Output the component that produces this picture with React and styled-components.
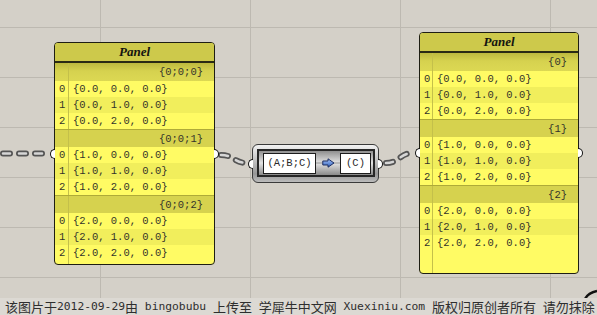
import styled, { createGlobalStyle } from "styled-components";

const GlobalStyle = createGlobalStyle`
  html, body {
    margin: 0;
    padding: 0;
    width: 597px;
    height: 315px;
    overflow: hidden;
    background: #d4d0c8;
  }
`;

const mono = `"Liberation Mono", "DejaVu Sans Mono", monospace`;

const Page = styled.div`
  width: 597px;
  height: 315px;
  display: flex;
  flex-direction: column;
`;

const Canvas = styled.div`
  position: relative;
  height: 298px;
  flex: none;
  background-color: #d4d0c8;
  background-image: linear-gradient(to right, #bdb9b1 1px, transparent 1px),
    linear-gradient(to bottom, #bdb9b1 1px, transparent 1px);
  background-size: 150px 50px;
  background-position: 100px 27px;
  overflow: hidden;
`;

const Wires = styled.svg`
  position: absolute;
  left: 0;
  top: 0;
`;

const PanelBox = styled.div`
  position: absolute;
  left: ${(p) => p.$x}px;
  top: ${(p) => p.$y}px;
  width: ${(p) => p.$w}px;
  height: ${(p) => p.$h}px;
  box-sizing: border-box;
  border: 1px solid #1e1e14;
  border-radius: 4px;
  background: #fffb64;
  display: flex;
  flex-direction: column;
`;

const PanelTitle = styled.div`
  height: 18px;
  border-bottom: 2px solid #2a2a14;
  background: #cdc94b;
  border-radius: 3px 3px 0 0;
  font: italic bold 13px "Liberation Serif", "DejaVu Serif", serif;
  color: #141410;
  text-align: center;
  line-height: 18px;
`;

const PanelBody = styled.div`
  flex: 1;
  display: flex;
  flex-direction: column;
  overflow: hidden;
  border-radius: 0 0 3px 3px;
`;

const Line = styled.div`
  display: flex;
  height: ${(p) => (p.$head ? 18 : 16)}px;
  box-sizing: border-box;
  font: 10.5px ${mono};
  color: #33332a;
  line-height: ${(p) => (p.$head ? 18 : 16)}px;
  background: ${(p) =>
    p.$head
      ? p.$first
        ? "linear-gradient(#bdb93e, #d6d24f 45%, #dcd853)"
        : "#d6d24e"
      : p.$alt
      ? "#f1ee5c"
      : "#fffb64"};
  border-top: ${(p) => (p.$head && !p.$first ? "1px solid #aeaa38" : "none")};
`;

const Index = styled.span`
  width: ${(p) => p.$iw}px;
  flex: none;
  box-sizing: border-box;
  padding-left: 4px;
  border-right: 1px solid #c4c04a;
`;

const Value = styled.span`
  flex: 1;
  padding-left: 4px;
  padding-right: 11px;
  text-align: ${(p) => (p.$right ? "right" : "left")};
  white-space: pre;
`;

const Filler = styled.div`
  flex: 1;
  display: flex;
`;

const Grip = styled.span`
  position: absolute;
  top: 50%;
  ${(p) => (p.$side === "left" ? "left: -5px;" : "right: -5px;")}
  width: 4px;
  height: 8px;
  margin-top: -5px;
  background: #fff;
  border: 1.5px solid #111;
  ${(p) => (p.$side === "left" ? "border-right: none;" : "border-left: none;")}
  border-radius: ${(p) => (p.$side === "left" ? "5px 0 0 5px" : "0 5px 5px 0")};
`;

const Comp = styled.div`
  position: absolute;
  left: 252px;
  top: 144px;
  width: 127px;
  height: 39px;
  box-sizing: border-box;
  border: 1px solid #3a3a3a;
  border-radius: 6px;
  background: linear-gradient(#f2f2f2, #cacaca 35%, #969696 78%, #bcbcbc);
  padding: 4px 3px 5px 4px;
`;

const CompFrame = styled.div`
  position: relative;
  height: 28px;
  box-sizing: border-box;
  border: 2px solid #262626;
  background: linear-gradient(#8f8f8f, #e4e4e4 50%, #8a8a8a);
  display: flex;
  align-items: center;
  padding: 0 2px 0 4px;
`;

const ParamBox = styled.div`
  width: ${(p) => p.$w}px;
  height: 21px;
  box-sizing: border-box;
  border: 1px solid #1c1c1c;
  background: #fff;
  font: 10.5px ${mono};
  color: #2a2a2a;
  display: flex;
  align-items: center;
  justify-content: center;
  flex: none;
`;

const Link = styled.div`
  flex: 1;
  height: 21px;
  display: flex;
  align-items: center;
  justify-content: center;
  background: linear-gradient(transparent 9px, #b8b8b8 9px, #b8b8b8 11px, transparent 11px);
`;

const Footer = styled.div`
  flex: 1;
  display: flex;
  align-items: center;
  background: #dcd9d3;
  color: #2e2e2e;
  font-family: "Noto Sans CJK SC", sans-serif;
  font-size: 13px;
  line-height: 15px;
  padding-left: 5px;
  white-space: pre;
`;

const Lat = styled.span`
  font-family: "DejaVu Sans Mono", monospace;
  font-size: 11.3px;
`;

const Panel = ({ x, y, w, h, iw, paths }) => (
  <PanelBox $x={x} $y={y} $w={w} $h={h}>
    <PanelTitle>Panel</PanelTitle>
    <PanelBody>
      {paths.map((path, g) => (
        <div key={path}>
          <Line $head $first={g === 0}>
            <Index $iw={iw} />
            <Value $right>{path}</Value>
          </Line>
          {[0, 1, 2].map((i) => (
            <Line key={i} $alt={i === 1}>
              <Index $iw={iw}>{i}</Index>
              <Value>{`{${g}.0, ${i}.0, 0.0}`}</Value>
            </Line>
          ))}
        </div>
      ))}
      <Filler>
        <Index $iw={iw} />
      </Filler>
    </PanelBody>
    <Grip $side="left" />
    <Grip $side="right" />
  </PanelBox>
);

const Wire = ({ d }) => (
  <g fill="none" strokeLinecap="round">
    <path d={d} stroke="#555" strokeWidth="6" strokeDasharray="7 9" />
    <path d={d} stroke="#d6d6d6" strokeWidth="2.5" strokeDasharray="7 9" />
  </g>
);

const Arrow = () => (
  <svg width="13" height="10" viewBox="0 0 13 10">
    <defs>
      <linearGradient id="ar" x1="0" y1="0" x2="0" y2="1">
        <stop offset="0" stopColor="#a9c8ff" />
        <stop offset="1" stopColor="#2f5fb8" />
      </linearGradient>
    </defs>
    <path
      d="M0.8 3 H6 V0.8 L12 5 L6 9.2 V7 H0.8 Z"
      fill="url(#ar)"
      stroke="#1d2e62"
      strokeWidth="1"
      strokeLinejoin="round"
    />
  </svg>
);

export default function App() {
  return (
    <>
      <GlobalStyle />
      <Page>
        <Canvas>
          <Wires width="597" height="298">
            <Wire d="M3 153.5 L48 153.5" />
            <Wire d="M221 155 C234 155, 234 163, 247 163" />
            <Wire d="M386 163 C399 163, 400 153, 413 153" />
            <path d="M585 299 Q588 293 597 291" stroke="#111" strokeWidth="2.5" fill="none" />
          </Wires>
          <Panel
            x={54}
            y={42}
            w={161}
            h={223}
            iw={14}
            paths={["{0;0;0}", "{0;0;1}", "{0;0;2}"]}
          />
          <Panel x={419} y={32} w={160} h={242} iw={13} paths={["{0}", "{1}", "{2}"]} />
          <Comp>
            <CompFrame>
              <ParamBox $w={53}>(A;B;C)</ParamBox>
              <Link>
                <Arrow />
              </Link>
              <ParamBox $w={31}>(C)</ParamBox>
            </CompFrame>
            <Grip $side="left" />
            <Grip $side="right" />
          </Comp>
        </Canvas>
        <Footer>
          该图片于<Lat>2012-09-29</Lat>由<Lat> bingobubu </Lat>上传至<Lat> </Lat>学犀牛中文网<Lat> Xuexiniu.com </Lat>版权归原创者所有<Lat> </Lat>请勿抹除
        </Footer>
      </Page>
    </>
  );
}
